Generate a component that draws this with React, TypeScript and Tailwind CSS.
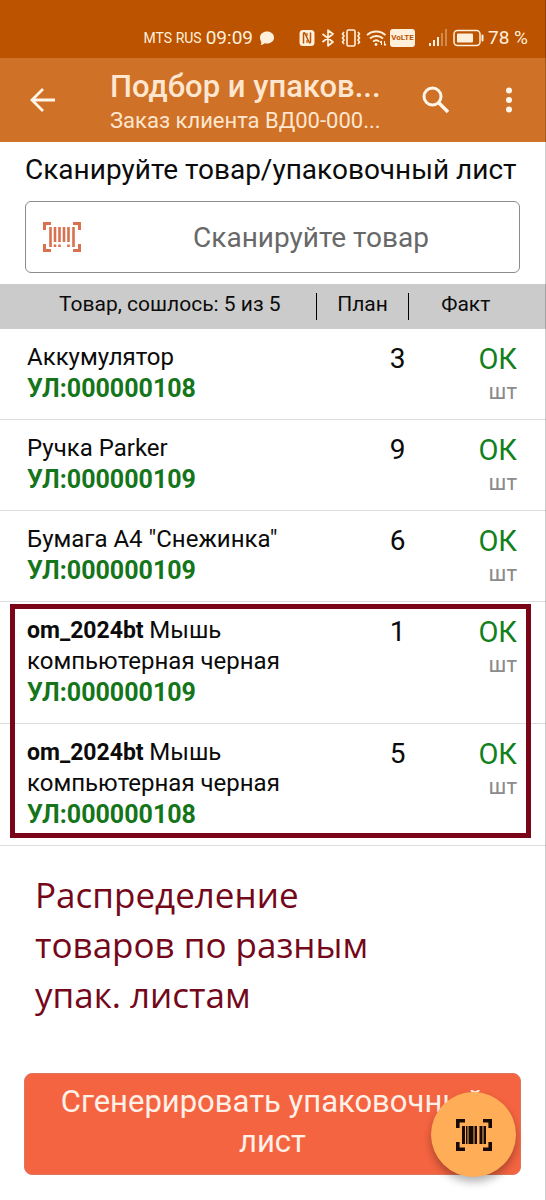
import { ReactNode } from 'react';

type Item = {
  sku?: string;
  name: string;
  sheet: string;
  plan: number;
  unit: string;
};

const items: Item[] = [
  { name: 'Аккумулятор', sheet: 'УЛ:000000108', plan: 3, unit: 'шт' },
  { name: 'Ручка Parker', sheet: 'УЛ:000000109', plan: 9, unit: 'шт' },
  { name: 'Бумага А4 "Снежинка"', sheet: 'УЛ:000000109', plan: 6, unit: 'шт' },
];

const splitItems: Item[] = [
  { sku: 'om_2024bt', name: 'Мышь компьютерная черная', sheet: 'УЛ:000000109', plan: 1, unit: 'шт' },
  { sku: 'om_2024bt', name: 'Мышь компьютерная черная', sheet: 'УЛ:000000108', plan: 5, unit: 'шт' },
];

function StatusBar() {
  return (
    <div className="flex h-[58px] items-center justify-end bg-[#bb5300] pr-[18px] pt-[18px] text-[#fff0dc]">
      <span className="text-[14px]">MTS RUS</span>
      <span className="ml-1 text-[19px]">09:09</span>
      <svg className="ml-[6px] h-4 w-4" viewBox="0 0 16 16" fill="currentColor">
        <path d="M8 1.500c4 0 7 2.500 7 6s-3 6-7 6c-.8 0-1.600-.1-2.300-.3C4.500 14.300 3 14.800 1.500 14.800c.6-.8.9-1.800.9-2.900C1.500 10.800 1 9.200 1 7.500c0-3.500 3-6 7-6z" />
      </svg>

      {/* NFC */}
      <svg className="ml-6 h-[18px] w-4" viewBox="0 0 16 18" fill="none">
        <rect x="0.500" y="1" width="15" height="16" rx="3.500" fill="currentColor" />
        <path d="M4.500 14.500V4.500C4.500 3.500 5.500 3.500 6 4.500l4 8.500c.5 1 1.500 1 1.500 0V3.500" stroke="#bb5300" strokeWidth="1.500" />
        <path d="M8 4v3M8 11v3" stroke="#bb5300" strokeWidth="1.200" />
      </svg>
      {/* Bluetooth */}
      <svg className="ml-[6px] h-[18px] w-[14px]" viewBox="0 0 14 18" fill="none" stroke="currentColor" strokeWidth="1.700">
        <path d="M1.500 5l10.500 8-5 3.800V1.200L12 5 1.500 13" strokeLinejoin="round" />
      </svg>
      {/* Vibration */}
      <svg className="ml-[5px] h-5 w-[22px]" viewBox="0 0 22 20" fill="none" stroke="currentColor" strokeWidth="1.600">
        <rect x="7" y="2" width="8" height="16" rx="1.500" />
        <path d="M4 4L2.500 6 4 8 2.500 10 4 12l-1.500 2L4 16M18 4l1.500 2L18 8l1.500 2-1.500 2 1.500 2-1.500 2" />
      </svg>
      {/* Wi-Fi */}
      <svg className="ml-1 h-[18px] w-[21px]" viewBox="0 0 21 18" fill="none" stroke="currentColor" strokeWidth="1.900">
        <path d="M1 6.200c5-5 13.500-5 18.500 0M4 9.500c3.600-3.300 9.400-3.300 13 0M7 12.600c2-1.700 4.500-1.700 6.300 0" />
        <circle cx="10" cy="15.500" r="1.400" fill="currentColor" stroke="none" />
        <path d="M15.500 16v-4m-1.500 1.500l1.500-1.500M18.500 12v4.500m1.500-1.500l-1.500 1.500" strokeWidth="1.100" />
      </svg>
      <span className="ml-[3px] flex h-[18px] w-[25px] items-center justify-center rounded-[3px] bg-[#fff0dc] text-[8px] font-bold text-[#bb5300]">
        VoLTE
      </span>
      {/* Signal */}
      <svg className="ml-[14px] h-[18px] w-[18px]" viewBox="0 0 18 18" fill="currentColor">
        <rect x="0" y="14" width="2" height="3" />
        <rect x="4" y="11" width="2" height="6" />
        <rect x="8" y="8" width="2" height="9" />
        <rect x="12" y="4" width="2" height="13" opacity="0.350" />
        <rect x="16" y="0" width="2" height="17" opacity="0.350" />
      </svg>
      {/* Battery */}
      <svg className="ml-[6px] h-[18px] w-[31px]" viewBox="0 0 31 18" fill="none">
        <rect x="1" y="1.500" width="26" height="15" rx="3.500" stroke="currentColor" strokeWidth="1.500" />
        <rect x="4" y="4.500" width="16" height="9" rx="1" fill="currentColor" />
        <rect x="28.500" y="5.500" width="2" height="7" rx="1" fill="currentColor" />
      </svg>
      <span className="ml-1 text-[19px]">78 %</span>
    </div>
  );
}

function AppBar() {
  return (
    <header className="flex h-[84px] items-center bg-[#cf7127] pl-[30px] pr-[30px] text-[#fff6ea]">
      <button type="button" aria-label="Назад" className="shrink-0">
        <svg className="h-[26px] w-[26px]" viewBox="0 0 26 26" fill="none" stroke="currentColor" strokeWidth="2.800">
          <path d="M25 13H3M13 2L2 13l11 11" />
        </svg>
      </button>
      <div className="ml-[54px] min-w-0 flex-1 whitespace-nowrap pt-[6px] text-[#ffe6cf]">
        <h1 className="text-[31px] font-medium leading-9">Подбор и упаков...</h1>
        <p className="text-[22px] leading-8">Заказ клиента ВД00-000...</p>
      </div>
      <button type="button" aria-label="Поиск" className="shrink-0">
        <svg className="h-7 w-7" viewBox="0 0 28 28" fill="none" stroke="currentColor" strokeWidth="3">
          <circle cx="10.500" cy="10.500" r="8.500" />
          <path d="M16.500 16.500l9.500 9.500" strokeWidth="3.600" />
        </svg>
      </button>
      <button type="button" aria-label="Меню" className="ml-[52px] shrink-0">
        <svg className="h-[26px] w-[14px]" viewBox="0 0 14 26" fill="currentColor">
          <circle cx="7" cy="3.500" r="3" />
          <circle cx="7" cy="13" r="3" />
          <circle cx="7" cy="22.500" r="3" />
        </svg>
      </button>
    </header>
  );
}

function Row({ item }: { item: Item }) {
  return (
    <tr className="border-b border-[#dcdedd] align-top">
      <td className="pb-[15px] pl-[27px] pr-2 pt-[13px] text-[24px] leading-[31px]">
        {item.sku && <b className="text-[23px] leading-[30px]">{item.sku} </b>}
        {item.name}
        <div className="text-[25px] font-bold leading-[31px] text-[#14751a]">{item.sheet}</div>
      </td>
      <td className="pr-1 pt-[13px] text-right text-[28px] leading-[34px]">{item.plan}</td>
      <td className="pr-[29px] pt-[13px] text-right">
        <div className="text-[29px] leading-[34px] text-[#12801c]">ОК</div>
        <div className="text-[22px] leading-8 text-[#8b8b8b]">{item.unit}</div>
      </td>
    </tr>
  );
}

function HeadCell({ children, divider }: { children: ReactNode; divider?: boolean }) {
  return (
    <th className="px-0 py-[9px] font-normal">
      <div className={divider ? 'border-r border-black pb-1 leading-[23px]' : 'pb-1 pr-6 leading-[23px]'}>
        {children}
      </div>
    </th>
  );
}

export default function App() {
  return (
    <div className="relative flex min-h-screen flex-col bg-white font-[Roboto,sans-serif] text-[#0b0b0b]">
      <StatusBar />
      <AppBar />

      <main className="flex-1">
        <div className="pl-[25px] pr-[26px] pt-[10px]">
          <label htmlFor="scan" className="block whitespace-nowrap text-[28px] leading-9">
            Сканируйте товар/упаковочный лист
          </label>
          <div className="mt-[13px] flex h-[72px] items-center rounded-md border border-[#8c8c8c] pl-[17px]">
            <svg className="h-[30px] w-[38px] shrink-0 text-[#d9714f]" viewBox="0 0 38 30" fill="none" stroke="currentColor">
              <path d="M1.500 8V1.500H8M30 1.500h6.500V8M36.500 22v6.500H30M8 28.500H1.500V22" strokeWidth="3" />
              <path d="M7.500 5v20M12 5v15M16.500 5v15M21 5v15M25.500 5v15M30.500 5v20M12 22.500V25M16.500 22.500V25M25.500 22.500V25" strokeWidth="2.600" />
            </svg>
            <input
              id="scan"
              type="text"
              placeholder="Сканируйте товар"
              className="ml-[22px] h-full min-w-0 flex-1 bg-transparent text-center text-[28px] outline-none placeholder:text-[#686868]"
            />
          </div>
        </div>

        <table className="mt-[11px] w-full table-fixed border-collapse">
          <colgroup>
            <col className="w-[58%]" />
            <col className="w-[17%]" />
            <col className="w-[25%]" />
          </colgroup>
          <thead className="bg-[#cbcbcb] text-[21px]">
            <tr>
              <HeadCell divider>
                <span className="pl-6">Товар, сошлось: 5 из 5</span>
              </HeadCell>
              <HeadCell divider>План</HeadCell>
              <HeadCell>Факт</HeadCell>
            </tr>
          </thead>
          <tbody>
            {items.map((item) => (
              <Row key={item.name} item={item} />
            ))}
          </tbody>
          {/* Same product split between packing lists */}
          <tbody className="relative after:pointer-events-none after:absolute after:bottom-2 after:left-[10px] after:right-[15px] after:top-[2px] after:border-[5px] after:border-[#7a0519] after:content-['']">
            {splitItems.map((item) => (
              <Row key={item.sheet} item={item} />
            ))}
          </tbody>
        </table>

        <p className="w-[400px] max-w-full pl-[35px] pt-6 font-['Open_Sans',sans-serif] text-[35px] leading-[50px] text-[#74081a]">
          Распределение товаров по разным упак. листам
        </p>
      </main>

      <footer className="relative pb-[25px] pl-6 pr-[25px]">
        <button
          type="button"
          className="w-full rounded-lg border border-[#dc765a] bg-[#f56440] px-8 pb-3 pt-2 text-[31px] leading-10 text-[#fff0e8]"
        >
          Сгенерировать упаковочный лист
        </button>
        <button
          type="button"
          aria-label="Сканировать"
          className="absolute bottom-[23px] right-[30px] flex h-[85px] w-[85px] items-center justify-center rounded-full bg-[#ffad57] text-[#160a02] shadow-[0_5px_8px_rgba(0,0,0,0.3)]"
        >
          <svg className="h-[32px] w-[36px]" viewBox="0 0 36 32" fill="none" stroke="currentColor">
            <path d="M1.800 9V1.800H9M27 1.800h7.200V9M34.200 23v7.200H27M9 30.200H1.800V23" strokeWidth="3.600" />
            <path
              d="M6 7h3v18H6zM10 7h1.500v18H10zM12.500 7h5v18h-5zM18.500 7h2.500v18h-2.500zM23.500 7h3v18h-3zM27.500 7h2.500v18h-2.500z"
              fill="currentColor"
              stroke="none"
            />
          </svg>
        </button>
      </footer>

      <div className="pointer-events-none absolute inset-y-0 right-0 w-px bg-black/20" />
    </div>
  );
}
